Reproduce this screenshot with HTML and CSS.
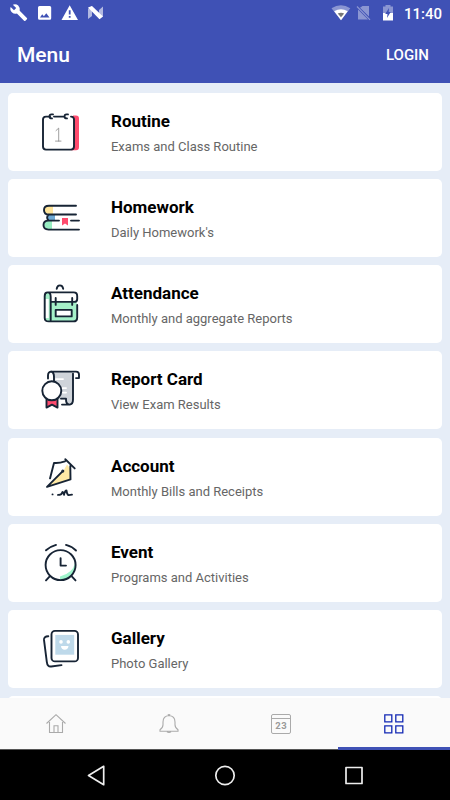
FILE: index.html
```html
<!DOCTYPE html>
<html lang="en">
<head>
    <meta charset="UTF-8">
    <meta name="viewport" content="width=device-width, initial-scale=1.0">
    <title>Menu</title>
    <link rel="stylesheet" href="styles.css">
</head>
<body>
    <div class="screen">
        <header class="header">
            <div class="status-bar">
                <svg width="110" height="26" viewBox="0 0 110 26" fill="#fff">
                    <path d="M26.900 18 19.700 10.800Q20.400 8 18.200 5.600 15.900 3.500 12.800 4.700L16.200 8 14 10.300 10.700 7.100Q9.500 9.900 11.800 12.200 14.100 14.400 16.900 13.600L24.100 20.800Q24.800 21.400 25.400 20.800L26.900 19.300Q27.500 18.600 26.900 18Z"/>
                    <path fill-rule="evenodd" d="M39.500 6h10.200q1.500 0 1.500 1.500v10.700q0 1.500-1.500 1.500H39.500q-1.500 0-1.500-1.500V7.500Q38 6 39.500 6ZM40 17.500h9.500l-3.200-4.300-2.400 3-1.700-2Z"/>
                    <path fill-rule="evenodd" d="M69.700 5.200 78 19.900H61.500ZM68.800 10.200v4.200h1.800v-4.200ZM68.800 16v1.800h1.800V16Z"/>
                    <path opacity=".6" d="M88 8.700 92 6v10l-4 3ZM99 10l4-3.500v9.800l-4 2.700Z"/>
                    <path d="M88 7.500 92 6l11 10.500-3.500 2.700Z"/>
                </svg>
                <div class="status-right">
                    <svg width="66" height="26" viewBox="330 0 66 26" fill="#fff">
                        <path opacity=".4" d="M331.500 8.300Q341 2 350.300 8.300L341 20.200Z"/>
                        <path d="M334.200 11.300Q341 7 347.700 11.300L341 20.200Z"/>
                        <path fill="#777" d="M337.700 13.500q3.300-1.600 6.500 0L341 17.300Z"/>
                        <path opacity=".4" d="M362.500 6h6.500v10.500L360 7.800ZM358 9.500l10 10h-10Z"/>
                        <path opacity=".4" fill="none" stroke="#fff" stroke-width="1.200" d="m357 6.500 13 13.300"/>
                        <path opacity=".4" d="M383 6.500h2.500V5h5v1.500h2.500V13h-10Z"/>
                        <path d="M383 13h10v7.500h-10Z"/>
                        <path fill="#3f51b5" d="m389 8-3.800 6h2.300l-.5 4 3.700-6h-2Z"/>
                    </svg>
                    <span class="clock">11:40</span>
                </div>
            </div>
            <div class="toolbar">
                <h1>Menu</h1>
                <span class="login">LOGIN</span>
            </div>
        </header>

        <main class="menu-list">
            <div class="menu-card">
                <svg class="menu-icon" viewBox="0 -.6 60 60">
                    <path fill="#ff4b6e" stroke="none" d="M43 14h3q3 0 3 3v28.500q0 3.200-3 3.200h-5Z"/>
                    <path fill="#fff" d="M20 15h-4q-3 0-3 3v27q0 3 3 3h25q3 0 3-3V18q0-3-3-3"/>
                    <path d="M24 15h9M23 12.800h-1.500q-2 0-2 2t2.500 2M38 12.800h-1.500q-2 0-2 2t2.500 2"/>
                    <path stroke="#888" stroke-width=".8" d="m26 29 2.700-2.500V39.500M25.500 39.500h5.500"/>
                </svg>
                <div class="menu-text">
                    <h2>Routine</h2>
                    <p>Exams and Class Routine</p>
                </div>
            </div>
            <div class="menu-card">
                <svg class="menu-icon" viewBox="0 -.1 60 60">
                    <path fill="#ffe59b" stroke="none" d="M18 19h5v8h-5q-3.500-.5-3.500-4t3.500-4Z"/>
                    <path fill="#6ea9d5" stroke="none" d="M19 28h6v5h-6q-4-2.500 0-5Z"/>
                    <path fill="#97edc2" stroke="none" d="M18 34h4v8h-4q-4-1-4-4t4-4Z"/>
                    <path d="M46 18.600H19q-5 0-5 4.200 0 4.600 5 4.600h27M19 27.500q-3.500 2.500-.5 5.800M29 33.500H18.500q-5 0-5 4.500 0 4.500 5 4.500H49M41 33.500h8"/>
                    <path fill="#ff4b6e" stroke="none" d="M32 31h6v7.500l-3-2-3 2Z"/>
                </svg>
                <div class="menu-text">
                    <h2>Homework</h2>
                    <p>Daily Homework's</p>
                </div>
            </div>
            <div class="menu-card">
                <svg class="menu-icon" viewBox=".3 .1 60 60">
                    <path fill="#a5f0c9" stroke="none" d="M15 26v-3q0-4 3-4 2 0 3 5v5h26v19H18q-3 0-3-3Z"/>
                    <path fill="#fff" stroke="none" d="M15.500 26h3.500v19h-3.500ZM21 20h26v8.500H21Z"/>
                    <path d="M27 16q.5-3.500 3.200-3.500 2.800 0 3.300 3.500M15 45V23q0-3.500 3-3.500h26q3.500 0 3.500 3.500v3q0 3-3 3H21M18 19.500q3 0 3 4.500v23M47.500 32v12.500q0 4-4 4H19q-4 0-4-3.500M26 25v7M42.500 25v7"/>
                    <path fill="#fff" d="M26 37h16v6.500H26Z"/>
                </svg>
                <div class="menu-text">
                    <h2>Attendance</h2>
                    <p>Monthly and aggregate Reports</p>
                </div>
            </div>
            <div class="menu-card">
                <svg class="menu-icon" viewBox="0 -.6 60 60">
                    <path fill="#cfd4da" stroke="none" d="M22 12.500h20q1 2 1 5V40q0 4-3 5-4 0-4-5H24V21Z"/>
                    <path stroke="#fff" d="M26 19.500h7M32 28.500h4M33 33h3"/>
                    <path d="M18 19v-3q0-4 3.500-4H46q3 0 3 3v3.500h-3M43 14v26q0 5-3.500 5T36 40v-1h-5M32 45h8M21 12q3 .5 3 5v4.500"/>
                    <path fill="#ff4b6e" d="M16.500 39v9l5.500-3 5.500 3v-9Z"/>
                    <circle fill="#fff" cx="21.800" cy="31.200" r="9.500"/>
                </svg>
                <div class="menu-text">
                    <h2>Report Card</h2>
                    <p>View Exam Results</p>
                </div>
            </div>
            <div class="menu-card">
                <svg class="menu-icon" viewBox="0 -.4 60 60">
                    <path fill="#ffe9a5" stroke="none" d="m17 40 16-15 4-7 4 5v10Z"/>
                    <path d="m20 32 4-15.500q5 .5 11-1.500M40.300 19.500 40.500 33 17 40.500l15-15M35.300 12.800l9.400 9.200"/>
                    <circle cx="32.800" cy="24.700" r=".6"/>
                    <path d="M22.500 48h.1M28 48.500q3.500 0 4-2t1.500.2.500 1.500q1.300-4.800 2.500-4 .5 4 2 4.500 1.800-.2 3.500-.5"/>
                </svg>
                <div class="menu-text">
                    <h2>Account</h2>
                    <p>Monthly Bills and Receipts</p>
                </div>
            </div>
            <div class="menu-card">
                <svg class="menu-icon" viewBox="0 -.1 60 60">
                    <path fill="#a0f5cd" stroke="none" d="M45 31q-2 10-15 13.500V48q14-1 16-15Z"/>
                    <circle cx="30.600" cy="33" r="15"/>
                    <path d="M30.600 26v7.500H36M16 18.200q4-3.700 10-5.400M36 12.800q6 1.500 10 5.600M19.500 44.500l-3.500 3.800M42 44.500l3.500 3.800"/>
                </svg>
                <div class="menu-text">
                    <h2>Event</h2>
                    <p>Programs and Activities</p>
                </div>
            </div>
            <div class="menu-card">
                <svg class="menu-icon" viewBox="0 .1 60 60">
                    <path d="M18.300 18.300q-4.500.2-4.300 3.700l2.800 22q.6 5.200 4.400 4.600l10.300-1.400"/>
                    <rect fill="#fff" x="21.500" y="13" width="26.500" height="30.500" rx="3.500"/>
                    <path fill="#bed9ea" stroke="none" d="M25.300 17h18.900v19.800H25.300Z"/>
                    <g fill="#fff" stroke="none">
                        <circle cx="31" cy="24" r="1.800"/>
                        <circle cx="38.300" cy="24" r="1.800"/>
                        <path d="M31 28h7.500q-.5 3.800-3.800 3.800T31 28Z"/>
                    </g>
                </svg>
                <div class="menu-text">
                    <h2>Gallery</h2>
                    <p>Photo Gallery</p>
                </div>
            </div>
            <div class="menu-card"></div>
        </main>

        <nav class="tabs">
            <div class="tab">
                <svg width="22" height="22" viewBox="0 0 22 22">
                    <path d="m1.500 10.500 9.500-8.800 9.500 8.800M4.500 9v10.500h13V9M9 19v-6.200h4V19"/>
                </svg>
            </div>
            <div class="tab">
                <svg width="22" height="22" viewBox="0 0 22 22">
                    <path d="M2 18.300v-1.500q3-2 3-5V9q0-6 6-6.500 6 .5 6 6.500v2.800q0 3 3 5v1.500ZM9.800 2.200q1.200-1.400 2.400 0M9 18.800q2 1.400 4 0"/>
                </svg>
            </div>
            <div class="tab">
                <div class="calendar">23</div>
            </div>
            <div class="tab active">
                <svg width="22" height="22" viewBox="0 0 22 22">
                    <path d="M1.800 1.800h7v7h-7ZM12.800 1.800h7v7h-7ZM1.800 12.800h7v7h-7ZM12.800 12.800h7v7h-7Z"/>
                </svg>
            </div>
        </nav>

        <footer class="system-nav">
            <svg width="450" height="50" viewBox="0 .5 450 50">
                <path d="M103.700 16.800v18.400L88.500 26Z"/>
                <circle cx="225" cy="26" r="9.200"/>
                <path d="M346 18h16v16h-16Z"/>
            </svg>
        </footer>
    </div>
</body>
</html>
```
FILE: styles.css
```css
* {
    margin: 0;
    padding: 0;
    box-sizing: border-box;
}

body {
    font-family: Roboto, "Liberation Sans", sans-serif;
    background: #e6edf7;
}

.screen {
    height: 800px;
    display: flex;
    flex-direction: column;
    overflow: hidden;
}

.header {
    height: 83px;
    flex-shrink: 0;
    background: #3f51b5;
    color: white;
}

.status-bar {
    height: 26px;
    display: flex;
    justify-content: space-between;
    padding-right: 8px;
}

.status-right {
    display: flex;
    gap: 8px;
}

.clock {
    font-size: 15px;
    font-weight: 500;
    line-height: 28px;
}

.toolbar {
    height: 57px;
    display: flex;
    justify-content: space-between;
    align-items: center;
    padding: 0 21px 0 17px;
}

.toolbar h1 {
    font-size: 21px;
    font-weight: 500;
}

.login {
    font-size: 15px;
    font-weight: 500;
}

.menu-list {
    flex: 1;
    min-height: 0;
    overflow: hidden;
    display: flex;
    flex-direction: column;
    gap: 8.250px;
    padding: 9.600px 8.400px 0;
}

.menu-card {
    height: 78px;
    flex-shrink: 0;
    display: flex;
    background: white;
    border-radius: 5px;
}

.menu-icon {
    width: 60px;
    height: 60px;
    margin: 8px 21px 0 21.600px;
    fill: none;
    stroke: #172435;
    stroke-width: 1.900;
    stroke-linecap: round;
    stroke-linejoin: round;
}

.menu-text {
    padding-top: 18px;
}

.menu-text h2 {
    font-size: 17px;
    font-weight: 700;
    line-height: 21px;
    color: #000;
}

.menu-text p {
    margin-top: 6px;
    font-size: 13px;
    line-height: 18px;
    color: #666;
}

.tabs {
    height: 52px;
    flex-shrink: 0;
    display: flex;
    background: #fafafa;
}

.tab {
    flex: 1;
    display: flex;
    justify-content: center;
    align-items: center;
    border-bottom: 1px solid #555;
}

.tab svg {
    fill: none;
    stroke: #aaa;
    stroke-width: 1.100;
}

.tab.active {
    border-bottom: 3px solid #3f51b5;
}

.tab.active svg {
    position: relative;
    top: 1px;
    stroke: #1228b4;
    stroke-width: 1.300;
}

.calendar {
    width: 20px;
    height: 20px;
    border: 1px solid #aaa;
    border-radius: 2px;
    padding-top: 3px;
    background: linear-gradient(#aaa, #aaa) 0 3px / 100% 1px no-repeat;
    color: #999;
    font-size: 9.500px;
    font-weight: 700;
    line-height: 16px;
    letter-spacing: .6px;
    text-align: center;
}

.system-nav {
    height: 50px;
    flex-shrink: 0;
    background: #000;
}

.system-nav svg {
    display: block;
    fill: none;
    stroke: #eee;
    stroke-width: 1.700;
    stroke-linejoin: round;
}
```
